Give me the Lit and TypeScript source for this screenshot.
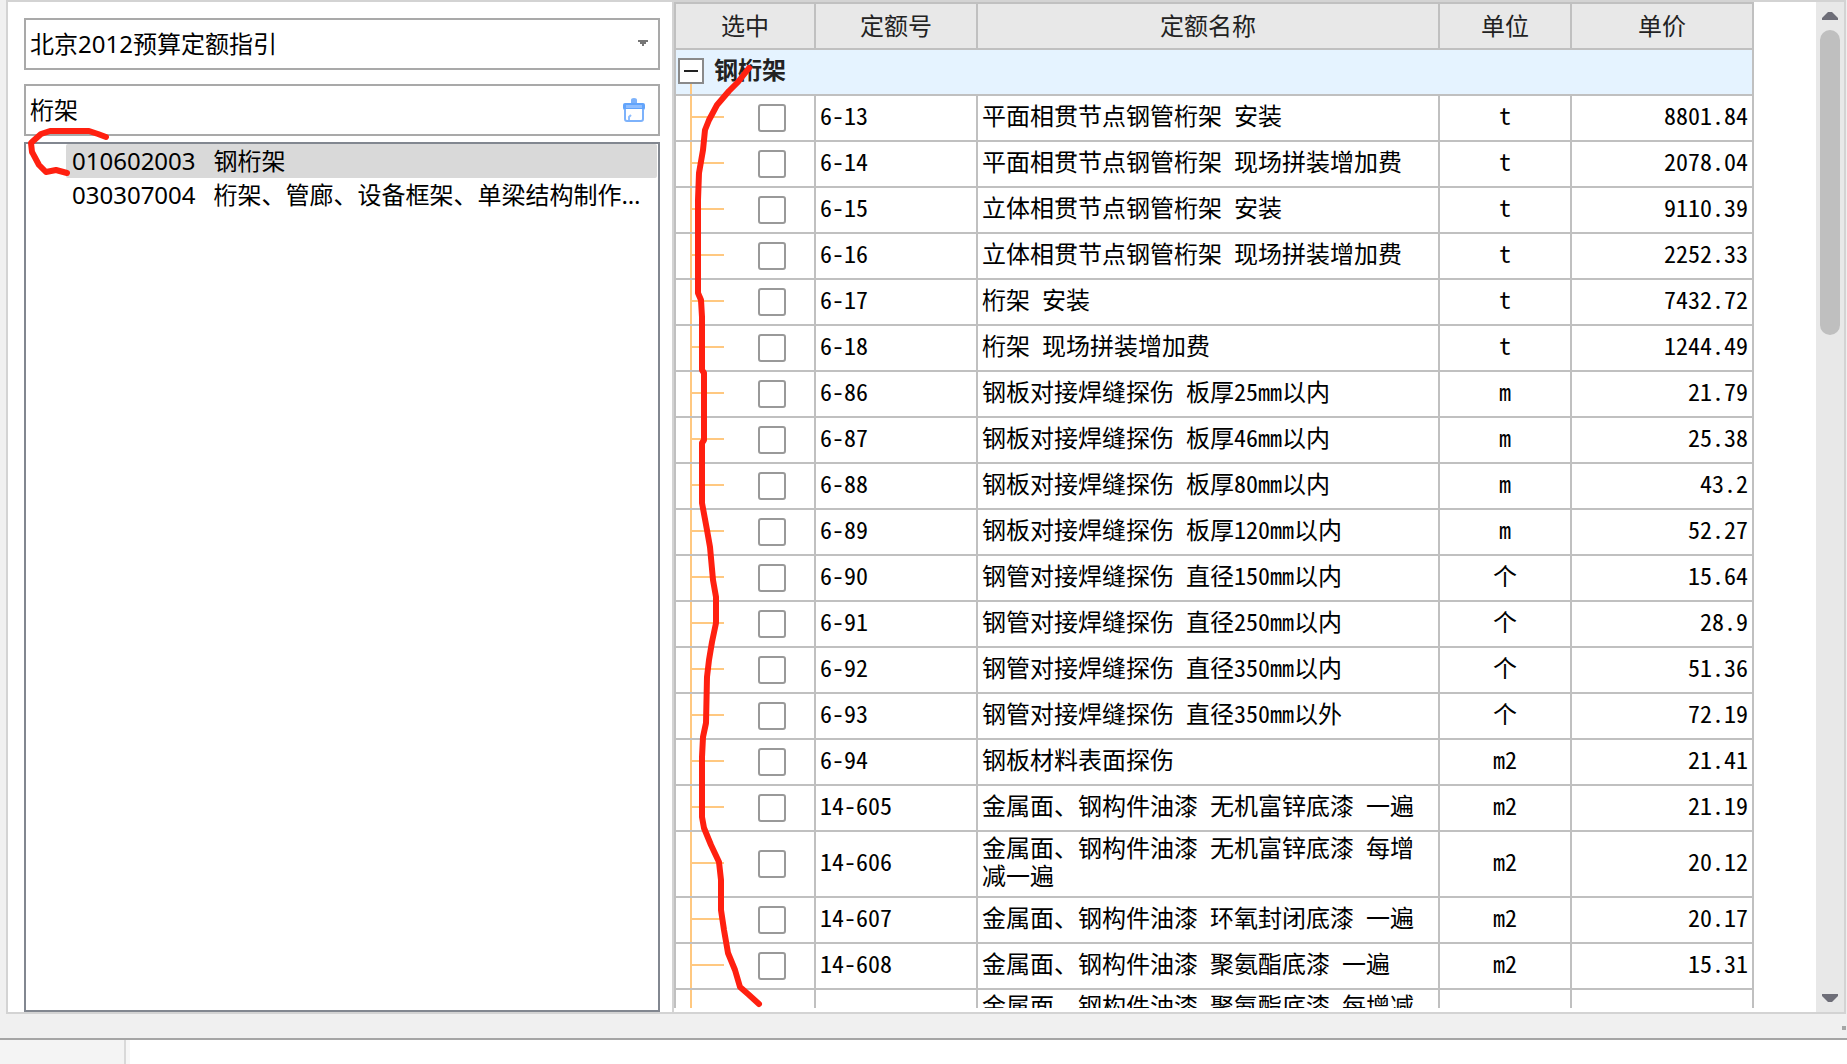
import { LitElement, html, css, svg } from "lit";
import { customElement, property, state } from "lit/decorators.js";

interface Quota {
  code: string;
  name: string;
  unit: string;
  price: string;
}

const QUOTAS: Quota[] = [
  { code: "6-13", name: "平面相贯节点钢管桁架 安装", unit: "t", price: "8801.84" },
  { code: "6-14", name: "平面相贯节点钢管桁架 现场拼装增加费", unit: "t", price: "2078.04" },
  { code: "6-15", name: "立体相贯节点钢管桁架 安装", unit: "t", price: "9110.39" },
  { code: "6-16", name: "立体相贯节点钢管桁架 现场拼装增加费", unit: "t", price: "2252.33" },
  { code: "6-17", name: "桁架 安装", unit: "t", price: "7432.72" },
  { code: "6-18", name: "桁架 现场拼装增加费", unit: "t", price: "1244.49" },
  { code: "6-86", name: "钢板对接焊缝探伤 板厚25mm以内", unit: "m", price: "21.79" },
  { code: "6-87", name: "钢板对接焊缝探伤 板厚46mm以内", unit: "m", price: "25.38" },
  { code: "6-88", name: "钢板对接焊缝探伤 板厚80mm以内", unit: "m", price: "43.2" },
  { code: "6-89", name: "钢板对接焊缝探伤 板厚120mm以内", unit: "m", price: "52.27" },
  { code: "6-90", name: "钢管对接焊缝探伤 直径150mm以内", unit: "个", price: "15.64" },
  { code: "6-91", name: "钢管对接焊缝探伤 直径250mm以内", unit: "个", price: "28.9" },
  { code: "6-92", name: "钢管对接焊缝探伤 直径350mm以内", unit: "个", price: "51.36" },
  { code: "6-93", name: "钢管对接焊缝探伤 直径350mm以外", unit: "个", price: "72.19" },
  { code: "6-94", name: "钢板材料表面探伤", unit: "m2", price: "21.41" },
  { code: "14-605", name: "金属面、钢构件油漆 无机富锌底漆 一遍", unit: "m2", price: "21.19" },
  { code: "14-606", name: "金属面、钢构件油漆 无机富锌底漆 每增减一遍", unit: "m2", price: "20.12" },
  { code: "14-607", name: "金属面、钢构件油漆 环氧封闭底漆 一遍", unit: "m2", price: "20.17" },
  { code: "14-608", name: "金属面、钢构件油漆 聚氨酯底漆 一遍", unit: "m2", price: "15.31" },
  { code: "", name: "金属面、钢构件油漆 聚氨酯底漆 每增减一遍", unit: "", price: "" },
];

const ITEMS = [
  { code: "010602003", name: "钢桁架" },
  { code: "030307004", name: "桁架、管廊、设备框架、单梁结构制作安装" },
];

@customElement("guide-panel")
class GuidePanel extends LitElement {
  @state() private selected = 0;

  static styles = css`
    :host {
      display: flex;
      flex-direction: column;
      background: #fff;
      padding: 16px 12px 0 16px;
      box-sizing: border-box;
      font: 24px/34px "Noto Sans", "Noto Sans CJK SC", sans-serif;
      color: #000;
    }
    .field {
      display: flex;
      align-items: center;
      box-sizing: border-box;
      height: 52px;
      margin-bottom: 14px;
      border: 2px solid #a9a9a9;
      padding: 0 12px 0 4px;
    }
    .field.search {
      margin-bottom: 6px;
    }
    .control {
      flex: 1;
      min-width: 0;
      height: 48px;
      appearance: none;
      box-sizing: border-box;
      border: 0;
      padding: 0;
      background: none;
      font: inherit;
      color: inherit;
      outline: none;
    }
    .search .control {
      padding-bottom: 4px;
    }
    .arrow {
      width: 10px;
      height: 8px;
      margin-right: -2px;
    }
    .clear {
      display: flex;
      border: 0;
      padding: 0;
      background: none;
    }
    .tree {
      flex: 1;
      min-height: 0;
      border: 2px solid #828790;
      overflow: hidden;
    }
    .list {
      list-style: none;
      margin: 0;
      padding: 0 1px 0 40px;
    }
    .item {
      display: block;
      width: 100%;
      height: 34px;
      border: 0;
      border-radius: 2px;
      padding: 0 12px 0 6px;
      background: none;
      font: inherit;
      color: inherit;
      text-align: left;
      white-space: nowrap;
      overflow: hidden;
      text-overflow: ellipsis;
    }
    .item.on {
      background: #d9d9d9;
    }
    .code {
      padding-right: 18px;
    }
  `;

  render() {
    return html`
      <div class="field">
        <select class="control" aria-label="定额指引">
          <option>北京2012预算定额指引</option>
        </select>
        <svg class="arrow" viewBox="0 0 10 8" aria-hidden="true">
          <path d="M0 0H10V2H8V4H6V6H4V4H2V2H0Z" fill="#767676" />
        </svg>
      </div>
      <div class="field search">
        <input class="control" type="text" aria-label="搜索" value="桁架" />
        <button class="clear" aria-label="清除">
          <svg width="24" height="24" viewBox="0 0 24 24" aria-hidden="true">
            <path d="M9 7V2q0-2 3-2t3 2v5Z" fill="#7db2fb" />
            <rect x="1" y="5" width="22" height="7" rx="2" fill="#62a4fb" />
            <rect x="4" y="7" width="16" height="3" fill="#8fbeff" />
            <path d="M3 11V21q0 2 2 2H19q2 0 2-2V11" fill="#fff" stroke="#7db2fb" stroke-width="2" />
            <path d="M7 22V19L9 17" fill="none" stroke="#8fbeff" stroke-width="2" />
          </svg>
        </button>
      </div>
      <div class="tree">
        <ul class="list">
          ${ITEMS.map(
            (it, i) => html`<li>
              <button class="item ${i === this.selected ? "on" : ""}" @click=${() => (this.selected = i)}><span class="code">${it.code}</span>${it.name}</button>
            </li>`
          )}
        </ul>
      </div>
    `;
  }
}

@customElement("quota-table")
class QuotaTable extends LitElement {
  @property({ attribute: false }) rows: Quota[] = [];

  static styles = css`
    :host {
      display: block;
      min-width: 0;
      overflow: hidden;
      font: 24px/28px "Noto Sans Mono CJK SC", "Noto Sans CJK SC", monospace;
      color: #000;
    }
    .grid {
      width: 100%;
      table-layout: fixed;
      border-collapse: separate;
      border-spacing: 0;
      border-left: 2px solid #c0c0c0;
      border-top: 2px solid #c0c0c0;
    }
    .c-check {
      width: 140px;
    }
    .c-code {
      width: 162px;
    }
    .c-unit {
      width: 132px;
    }
    .c-price {
      width: 182px;
    }
    th,
    td {
      box-sizing: border-box;
      height: 46px;
      padding: 1px 4px 7px;
      border-right: 2px solid #c0c0c0;
      border-bottom: 2px solid #c0c0c0;
      text-align: left;
      vertical-align: middle;
      font-weight: 400;
    }
    .head th {
      padding: 2px 4px 4px;
      background: #e8e8e8;
      color: #222;
      text-align: center;
    }
    .group th {
      padding: 0 2px;
      background: #e5f3ff;
      color: #222;
      font-weight: 700;
    }
    .title {
      display: flex;
      align-items: center;
      height: 44px;
      gap: 10px;
    }
    .label {
      padding-bottom: 6px;
    }
    .branch {
      display: flex;
      flex-direction: column;
      height: 44px;
    }
    .toggle {
      display: flex;
      flex: none;
      align-items: center;
      justify-content: center;
      box-sizing: border-box;
      width: 26px;
      height: 26px;
      border: 2px solid #8a8a8a;
      padding: 0;
      background: #fff;
    }
    .bar {
      width: 14px;
      height: 2px;
      background: #222;
    }
    .branch::before {
      content: "";
      height: 8px;
    }
    .branch::after {
      content: "";
      flex: 1;
      width: 2px;
      margin-left: 12px;
      background: #ffc880;
    }
    td.pick {
      padding: 0;
      background:
        linear-gradient(#ffc880, #ffc880) 14px 0 / 2px 100% no-repeat,
        linear-gradient(#ffc880, #ffc880) 14px calc(50% - 1px) / 34px 2px no-repeat;
    }
    .box {
      display: block;
      appearance: none;
      box-sizing: border-box;
      width: 28px;
      height: 28px;
      margin: 0 0 0 82px;
      border: 2px solid #999;
      border-radius: 3px;
      background: #fff;
    }
    .last .pick {
      background: linear-gradient(#ffc880, #ffc880) 14px 0 / 2px 100% no-repeat;
    }
    .unit {
      text-align: center;
    }
    .price {
      text-align: right;
    }
  `;

  render() {
    return html`
      <table class="grid">
        <colgroup>
          <col class="c-check" /><col class="c-code" /><col /><col class="c-unit" /><col class="c-price" />
        </colgroup>
        <thead>
          <tr class="head">
            <th scope="col">选中</th>
            <th scope="col">定额号</th>
            <th scope="col">定额名称</th>
            <th scope="col">单位</th>
            <th scope="col">单价</th>
          </tr>
        </thead>
        <tbody>
          <tr class="group">
            <th colspan="5" scope="rowgroup">
              <div class="title">
                <span class="branch"><button class="toggle" aria-label="折叠"><span class="bar"></span></button></span>
                <span class="label">钢桁架</span>
              </div>
            </th>
          </tr>
          ${this.rows.map(
            (r) => html`<tr class=${r.code ? "" : "last"}>
              <td class="pick">${r.code ? html`<input class="box" type="checkbox" aria-label=${r.code} />` : null}</td>
              <td>${r.code}</td>
              <td>${r.name}</td>
              <td class="unit">${r.unit}</td>
              <td class="price">${r.price}</td>
            </tr>`
          )}
        </tbody>
      </table>
    `;
  }
}

@customElement("scroll-track")
class ScrollTrack extends LitElement {
  static styles = css`
    :host {
      display: flex;
      flex-direction: column;
      width: 28px;
      background: #e8e8e8;
    }
    .step {
      display: flex;
      flex: none;
      align-items: center;
      justify-content: center;
      height: 28px;
      border: 0;
      padding: 0;
      background: none;
    }
    .track {
      flex: 1;
      padding: 0 4px;
    }
    .thumb {
      height: 32%;
      border-radius: 10px;
      background: #bfbfbf;
    }
  `;

  render() {
    return html`
      <button class="step" aria-label="向上">
        <svg width="16" height="8" viewBox="0 0 16 8"><path d="M0 8V6L6 0H10L16 6V8Z" fill="#6e6e78" /></svg>
      </button>
      <div class="track"><div class="thumb"></div></div>
      <button class="step" aria-label="向下">
        <svg width="16" height="8" viewBox="0 0 16 8"><path d="M0 0V2L6 8H10L16 2V0Z" fill="#6e6e78" /></svg>
      </button>
    `;
  }
}

const STROKES = [
  "M106 137L98 134L89 131H50L41 134L31 143L32 152L39 165L46 172L56 170L67 173",
  "M749 68L738 82L729 91L717 105L709 120L705 130L703 150L699 173L698 200V293L701 300L702 317V370L704 373V440L702 443V503L707 530L710 547L713 580L716 597V623L712 642L709 660L707 677L706 723L703 737L702 757V817L704 828L711 845L719 862L721 880V910L724 930L728 953L735 970L740 987L748 994L759 1004",
];

@customElement("app-root")
class AppRoot extends LitElement {
  static styles = css`
    :host {
      display: block;
    }
    .page {
      position: relative;
      display: flex;
      flex-direction: column;
      height: 100vh;
      overflow: hidden;
      background: #f0f0f0;
    }
    .frame {
      flex: 1;
      min-height: 0;
      display: flex;
      margin: 0 1px 0 6px;
      border: 2px solid #d3d3d3;
      background: #fff;
    }
    .side {
      flex: 0 0 664px;
      min-width: 0;
    }
    .main {
      flex: 1;
      min-width: 0;
      display: flex;
      border-left: 2px solid #d3d3d3;
    }
    .table {
      flex: 1;
      margin: 0 62px 4px 0;
    }
    .gap {
      display: flex;
      align-items: center;
      justify-content: flex-end;
      height: 24px;
      border-bottom: 2px solid #a5a5a5;
    }
    .grip {
      width: 4px;
      height: 4px;
      margin: 4px 1px 0 0;
      background: #a5a5a5;
    }
    .foot {
      display: flex;
      height: 24px;
      background: #fff;
    }
    .stub {
      width: 124px;
      border-right: 2px solid #d9d9d9;
      background: #f4f4f4;
    }
    .edge {
      width: 4px;
      background: #f7f7f7;
    }
    .ink {
      position: absolute;
      top: 0;
      left: 0;
      pointer-events: none;
    }
  `;

  render() {
    return html`
      <div class="page">
        <main class="frame">
          <guide-panel class="side"></guide-panel>
          <div class="main">
            <quota-table class="table" .rows=${QUOTAS}></quota-table>
            <scroll-track></scroll-track>
          </div>
        </main>
        <div class="gap"><span class="grip"></span></div>
        <div class="foot"><div class="stub"></div><div class="edge"></div></div>
        <svg class="ink" width="780" height="1020" viewBox="0 0 780 1020" aria-hidden="true">
          ${STROKES.map(
            (d) => svg`<path d=${d} fill="none" stroke="#ff2010" stroke-width="6" stroke-linecap="round" stroke-linejoin="round" />`
          )}
        </svg>
      </div>
    `;
  }
}
